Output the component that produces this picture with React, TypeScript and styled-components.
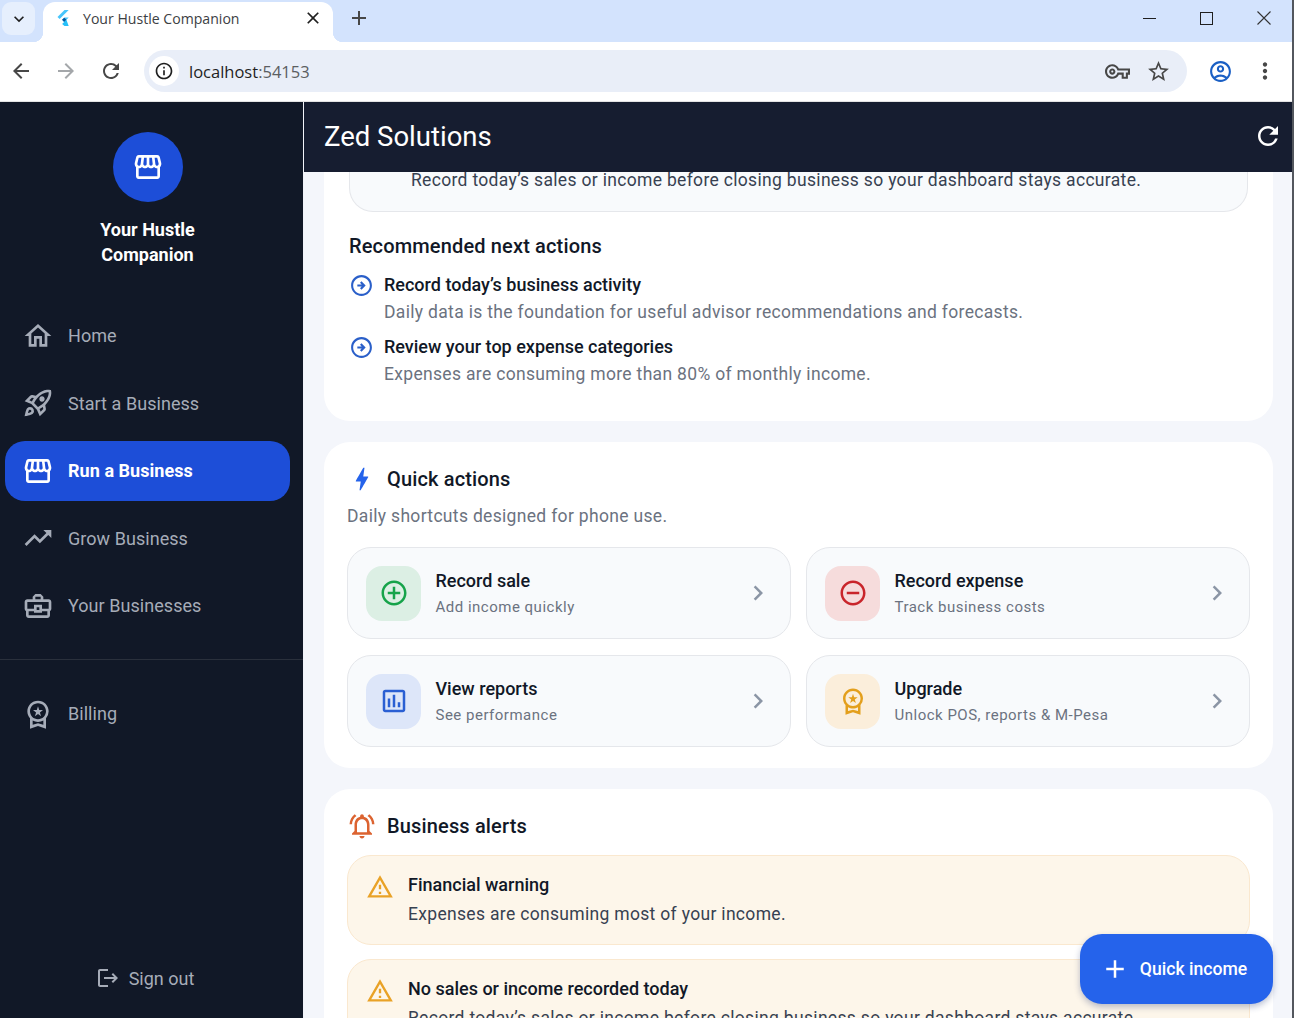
import React from 'react'
import styled, { createGlobalStyle } from 'styled-components'
import {
  MdAdd,
  MdArrowBack,
  MdArrowForward,
  MdBolt,
  MdChevronRight,
  MdClose,
  MdInfoOutline,
  MdKeyboardArrowDown,
  MdLogout,
  MdMoreVert,
  MdOutlineAccountCircle,
  MdOutlineAddCircleOutline,
  MdOutlineArrowCircleRight,
  MdOutlineAssessment,
  MdOutlineBusinessCenter,
  MdOutlineHome,
  MdOutlineNotificationsActive,
  MdOutlineRemoveCircleOutline,
  MdOutlineRocketLaunch,
  MdOutlineStorefront,
  MdOutlineVpnKey,
  MdOutlineWarningAmber,
  MdOutlineWorkspacePremium,
  MdRefresh,
  MdStarBorder,
  MdTrendingUp,
} from 'react-icons/md'

const GlobalStyle = createGlobalStyle`
  html, body {
    margin: 0;
    height: 100%;
    overflow: hidden;
  }
  body {
    font-family: Roboto, "Liberation Sans", sans-serif;
  }
`

const Window = styled.div`
  width: 1294px;
  height: 1018px;
  overflow: hidden;
  display: flex;
  flex-direction: column;
  box-sizing: border-box;
  border-right: 2px solid #53575e;
`

// BROWSER CHROME

const TabStrip = styled.div`
  height: 42px;
  flex-shrink: 0;
  background-color: #d3e3fd;
  display: flex;
  align-items: flex-end;
  padding-left: 2px;
`

const TabSearch = styled.div`
  width: 33px;
  height: 33px;
  margin-bottom: 7px;
  border-radius: 9px;
  background-color: #e6effd;
  color: #1f1f1f;
  display: flex;
  align-items: center;
  justify-content: center;
  font-size: 20px;
`

const Tab = styled.div`
  position: relative;
  width: 290px;
  height: 40px;
  margin-left: 8px;
  box-sizing: border-box;
  padding: 0 10px 8px 12px;
  background-color: white;
  border-radius: 12px 12px 0 0;
  display: flex;
  align-items: center;
  color: #3c4043;
  font-family: "Open Sans", Roboto, sans-serif;
  font-size: 14.1px;

  &::before, &::after {
    content: '';
    position: absolute;
    bottom: 0;
    width: 10px;
    height: 10px;
  }
  &::before {
    left: -10px;
    background: radial-gradient(circle at 0 0, #d3e3fd 10px, white 10.5px);
  }
  &::after {
    right: -10px;
    background: radial-gradient(circle at 100% 0, #d3e3fd 10px, white 10.5px);
  }
`

const TabTitle = styled.span`
  flex: 1;
  margin-left: 12px;
`

const TabClose = styled.span`
  display: flex;
  color: #1f1f1f;
  font-size: 20px;
`

const NewTab = styled.div`
  display: flex;
  margin: 0 0 12px 14px;
  color: #474747;
  font-size: 24px;
`

const WindowControls = styled.div`
  margin-left: auto;
  height: 36px;
  margin-bottom: 6px;
  display: flex;
  align-items: center;
  gap: 44px;
  padding-right: 21px;
  color: #1f1f1f;
`

const MinimizeGlyph = styled.div`
  width: 13px;
  height: 1px;
  background-color: #1f1f1f;
`

const MaximizeGlyph = styled.div`
  width: 11px;
  height: 11px;
  border: 1px solid #1f1f1f;
`

const Toolbar = styled.div`
  height: 60px;
  flex-shrink: 0;
  box-sizing: border-box;
  background-color: white;
  border-bottom: 1px solid #e3e3e3;
  display: flex;
  align-items: center;
  padding: 0 0 1px 9px;
  color: #474747;
`

const NavGlyph = styled.span<{ $muted?: boolean }>`
  width: 24px;
  height: 24px;
  margin-right: 21px;
  display: flex;
  font-size: 24px;
  color: ${(p) => (p.$muted ? '#a4a7aa' : '#474747')};
`

const Omnibox = styled.div`
  width: 1043px;
  height: 42px;
  box-sizing: border-box;
  padding: 0 16px 0 5px;
  border-radius: 21px;
  background-color: #e9eef8;
  display: flex;
  align-items: center;
`

const InfoBadge = styled.div`
  width: 30px;
  height: 30px;
  border-radius: 50%;
  background-color: white;
  color: #1f1f1f;
  display: flex;
  align-items: center;
  justify-content: center;
  font-size: 20px;
`

const Url = styled.span`
  margin-left: 10px;
  flex: 1;
  font-family: "Open Sans", Roboto, sans-serif;
  font-size: 16.5px;
  color: #1f1f1f;

  em {
    font-style: normal;
    color: #5b5e62;
  }
`

const OmniIcons = styled.div`
  display: flex;
  align-items: center;
  gap: 16px;
  font-size: 25px;
  color: #474747;
`

const KeyGlyph = styled(MdOutlineVpnKey)`
  font-size: 25px;
`

const ToolbarEnd = styled.div`
  display: flex;
  align-items: center;
  margin-left: 21px;
  gap: 19px;
`

const Profile = styled(MdOutlineAccountCircle)`
  font-size: 25px;
  color: #1a5fc4;
`

const More = styled(MdMoreVert)`
  font-size: 26px;
  color: #474747;
`

// APP LAYOUT

const AppFrame = styled.div`
  flex: 1;
  min-height: 0;
  display: flex;
`

const Sidebar = styled.aside`
  width: 303px;
  flex-shrink: 0;
  background-color: #111827;
  display: flex;
  flex-direction: column;
`

const Brand = styled.div`
  display: flex;
  flex-direction: column;
  align-items: center;
  padding: 30px 8px 0 0;
`

const BrandLogo = styled.div`
  width: 70px;
  height: 70px;
  border-radius: 50%;
  background-color: #1d4ed8;
  color: white;
  display: flex;
  align-items: center;
  justify-content: center;
  font-size: 32px;
`

const BrandName = styled.div`
  margin-top: 15px;
  width: 160px;
  text-align: center;
  color: white;
  font-size: 18px;
  line-height: 25px;
  font-weight: 700;
`

const NavList = styled.nav`
  margin-top: 39px;
  padding: 0 13px 0 5px;
  display: flex;
  flex-direction: column;
  gap: 7.5px;
`

const BillingList = styled(NavList)`
  margin-top: 0;
`

const NavItem = styled.div<{ $active?: boolean }>`
  height: 60px;
  box-sizing: border-box;
  padding: 0 0 1px 17px;
  border-radius: 20px;
  display: flex;
  align-items: center;
  gap: 14px;
  font-size: 18px;
  letter-spacing: 0.05px;
  font-weight: ${(p) => (p.$active ? 700 : 400)};
  color: ${(p) => (p.$active ? 'white' : '#a6acb8')};
  background-color: ${(p) => (p.$active ? '#1d4ed8' : 'transparent')};

  svg {
    font-size: 32px;
    flex-shrink: 0;
  }
`

const SideDivider = styled.div`
  height: 1px;
  margin: 23px 0 24px;
  background-color: #2a303c;
`

const SignOut = styled.div`
  margin-top: auto;
  margin-bottom: 28px;
  display: flex;
  align-items: center;
  justify-content: center;
  gap: 9px;
  color: #a6acb8;
  font-size: 18px;
  padding-right: 13px;

  svg {
    font-size: 24px;
  }
`

const Main = styled.main`
  flex: 1;
  min-width: 0;
  border-left: 1px solid #f1f3f9;
  background-color: #f4f6fb;
  display: flex;
  flex-direction: column;
  overflow: hidden;
  position: relative;
`

const AppBar = styled.header`
  height: 70px;
  flex-shrink: 0;
  box-sizing: border-box;
  padding: 0 9px 2px 20px;
  background-color: #161d30;
  color: white;
  display: flex;
  align-items: center;
  justify-content: space-between;
  position: relative;
  z-index: 1;
`

const AppTitle = styled.h1`
  margin: 0;
  font-size: 27.5px;
  font-weight: 400;
`

const RefreshIcon = styled(MdRefresh)`
  font-size: 30px;
`

const Scroller = styled.div`
  margin-top: -40px;
  padding: 0 19px 0 20px;
  display: flex;
  flex-direction: column;
  gap: 21px;
`

const Card = styled.section`
  background-color: white;
  border-radius: 26px;
  padding: 0 23px;
  flex-shrink: 0;
`

const TopCard = styled(Card)`
  height: 289px;
  border-radius: 0 0 26px 26px;
  padding: 0 25px;
`

const Banner = styled.div`
  height: 80px;
  box-sizing: border-box;
  padding: 36px 0 0 61px;
  background-color: #f8fafc;
  border: 1px solid #e5e7eb;
  border-top: 0;
  border-radius: 0 0 24px 24px;
  color: #374151;
  font-size: 17.5px;
  line-height: 24px;
  letter-spacing: 0.32px;
`

const Subheading = styled.h3`
  margin: 21px 0 14px;
  font-size: 20px;
  line-height: 26px;
  font-weight: 500;
  letter-spacing: 0.15px;
  color: #111827;
`

const ActionRow = styled.div`
  display: flex;
  gap: 10px;
  margin-bottom: 10px;
`

const ActionIcon = styled(MdOutlineArrowCircleRight)`
  font-size: 25px;
  color: #2a5fc9;
  flex-shrink: 0;
`

const ActionBody = styled.div`
  display: flex;
  flex-direction: column;
  gap: 2px;
`

const ActionTitle = styled.div`
  font-size: 18px;
  line-height: 24px;
  font-weight: 500;
  color: #111827;
`

const ActionText = styled.div`
  font-size: 17.5px;
  line-height: 26px;
  color: #6b7280;
  letter-spacing: 0.32px;
`

const CardHeading = styled.div`
  display: flex;
  align-items: center;
  gap: 10px;
  color: #111827;
  font-size: 20px;
  letter-spacing: 0.15px;
  font-weight: 500;
  line-height: 30px;
`

const CardHeadingIcon = styled.span<{ $color: string }>`
  width: 30px;
  display: flex;
  justify-content: center;
  font-size: 30px;
  color: ${(p) => p.$color};
`

const QuickCard = styled(Card)`
  padding-top: 22px;
  padding-bottom: 21px;
`

const QuickHint = styled.p`
  margin: 10px 0 19px;
  font-size: 17.5px;
  line-height: 24px;
  color: #6b7280;
  letter-spacing: 0.32px;
`

const TileGrid = styled.div`
  display: grid;
  grid-template-columns: 1fr 1fr;
  gap: 16px 15px;
`

const Tile = styled.div`
  height: 92px;
  box-sizing: border-box;
  padding: 0 19px 0 18px;
  background-color: #f8fafc;
  border: 1px solid #e5e7eb;
  border-radius: 24px;
  display: flex;
  align-items: center;
  gap: 14.5px;
`

const TileIcon = styled.div<{ $bg: string; $color: string }>`
  width: 55px;
  height: 55px;
  flex-shrink: 0;
  border-radius: 16px;
  background-color: ${(p) => p.$bg};
  color: ${(p) => p.$color};
  display: flex;
  align-items: center;
  justify-content: center;
  font-size: 30px;
`

const TileBody = styled.div`
  flex: 1;
  display: flex;
  flex-direction: column;
  gap: 4px;
`

const TileTitle = styled.div`
  color: #111827;
  font-size: 18px;
  line-height: 24px;
  font-weight: 500;
`

const TileText = styled.div`
  color: #6b7280;
  font-size: 15px;
  line-height: 20px;
  letter-spacing: 0.5px;
`

const Chevron = styled(MdChevronRight)`
  font-size: 30px;
  margin-right: -2px;
  color: #8b95a5;
`

const AlertsCard = styled(Card)`
  padding-top: 22px;
`

const AlertList = styled.div`
  margin-top: 14px;
  display: flex;
  flex-direction: column;
  gap: 14px;
`

const Alert = styled.div`
  height: 90px;
  box-sizing: border-box;
  padding: 17px 18px;
  background-color: #fdf6ea;
  border: 1px solid #fae8cf;
  border-radius: 24px;
  display: flex;
  gap: 14px;
`

const AlertIcon = styled(MdOutlineWarningAmber)`
  font-size: 28px;
  color: #e9a227;
  flex-shrink: 0;
`

const AlertBody = styled.div`
  display: flex;
  flex-direction: column;
  gap: 4px;
`

const AlertTitle = styled.div`
  color: #111827;
  font-size: 18px;
  line-height: 24px;
  font-weight: 500;
`

const AlertText = styled.div`
  color: #374151;
  font-size: 17.5px;
  line-height: 26px;
  letter-spacing: 0.32px;
  white-space: nowrap;
`

const Fab = styled.button`
  position: absolute;
  right: 19px;
  bottom: 14px;
  width: 193px;
  height: 70px;
  border: 0;
  border-radius: 22px;
  padding: 0 6px 0 0;
  background-color: #2563eb;
  color: white;
  font-family: inherit;
  font-size: 17.6px;
  font-weight: 500;
  display: flex;
  align-items: center;
  justify-content: center;
  gap: 10px;
  box-shadow: 0 3px 6px rgba(30, 50, 110, 0.3);
  z-index: 2;

  svg {
    font-size: 30px;
  }
`

const FlutterLogo = () => (
  <svg width="16" height="18" viewBox="0 0 16 18">
    <path d="M9.5 1h4.2L4.6 9.9 2.5 7.9z" fill="#47c5fb" />
    <path d="M9.5 8.4h4.2L9.2 13l-2.1-2.2z" fill="#47c5fb" />
    <path d="M7.1 10.8l2.1-2.1 2.2 2.1-2.2 2.2z" fill="#00569e" />
    <path d="M9.2 13l2.2-2.2 2.3 6.2H9.5L7.1 14.9z" fill="#00b5f8" opacity="0.85" />
  </svg>
)

const ThinClose = () => (
  <svg width="14" height="14" viewBox="0 0 14 14" fill="none" stroke="#333" strokeWidth="1.1">
    <path d="M0.5 0.5l13 13M13.5 0.5l-13 13" />
  </svg>
)

export default function App(): JSX.Element {
  return (
    <Window>
      <GlobalStyle />
      <TabStrip>
        <TabSearch>
          <MdKeyboardArrowDown />
        </TabSearch>
        <Tab>
          <FlutterLogo />
          <TabTitle>Your Hustle Companion</TabTitle>
          <TabClose>
            <MdClose />
          </TabClose>
        </Tab>
        <NewTab>
          <MdAdd />
        </NewTab>
        <WindowControls>
          <MinimizeGlyph />
          <MaximizeGlyph />
          <ThinClose />
        </WindowControls>
      </TabStrip>
      <Toolbar>
        <NavGlyph>
          <MdArrowBack />
        </NavGlyph>
        <NavGlyph $muted>
          <MdArrowForward />
        </NavGlyph>
        <NavGlyph>
          <MdRefresh />
        </NavGlyph>
        <Omnibox>
          <InfoBadge>
            <MdInfoOutline />
          </InfoBadge>
          <Url>
            localhost<em>:54153</em>
          </Url>
          <OmniIcons>
            <KeyGlyph />
            <MdStarBorder />
          </OmniIcons>
        </Omnibox>
        <ToolbarEnd>
          <Profile />
          <More />
        </ToolbarEnd>
      </Toolbar>
      <AppFrame>
        <Sidebar>
          <Brand>
            <BrandLogo>
              <MdOutlineStorefront />
            </BrandLogo>
            <BrandName>Your Hustle Companion</BrandName>
          </Brand>
          <NavList>
            <NavItem>
              <MdOutlineHome />
              Home
            </NavItem>
            <NavItem>
              <MdOutlineRocketLaunch />
              Start a Business
            </NavItem>
            <NavItem $active>
              <MdOutlineStorefront />
              Run a Business
            </NavItem>
            <NavItem>
              <MdTrendingUp />
              Grow Business
            </NavItem>
            <NavItem>
              <MdOutlineBusinessCenter />
              Your Businesses
            </NavItem>
          </NavList>
          <SideDivider />
          <BillingList as="div">
            <NavItem>
              <MdOutlineWorkspacePremium />
              Billing
            </NavItem>
          </BillingList>
          <SignOut>
            <MdLogout />
            Sign out
          </SignOut>
        </Sidebar>
        <Main>
          <AppBar>
            <AppTitle>Zed Solutions</AppTitle>
            <RefreshIcon />
          </AppBar>
          <Scroller>
            <TopCard>
              <Banner>Record today’s sales or income before closing business so your dashboard stays accurate.</Banner>
              <Subheading>Recommended next actions</Subheading>
              <ActionRow>
                <ActionIcon />
                <ActionBody>
                  <ActionTitle>Record today’s business activity</ActionTitle>
                  <ActionText>Daily data is the foundation for useful advisor recommendations and forecasts.</ActionText>
                </ActionBody>
              </ActionRow>
              <ActionRow>
                <ActionIcon />
                <ActionBody>
                  <ActionTitle>Review your top expense categories</ActionTitle>
                  <ActionText>Expenses are consuming more than 80% of monthly income.</ActionText>
                </ActionBody>
              </ActionRow>
            </TopCard>
            <QuickCard>
              <CardHeading>
                <CardHeadingIcon $color="#2563eb">
                  <MdBolt />
                </CardHeadingIcon>
                Quick actions
              </CardHeading>
              <QuickHint>Daily shortcuts designed for phone use.</QuickHint>
              <TileGrid>
                <Tile>
                  <TileIcon $bg="#dcefe4" $color="#16a34a">
                    <MdOutlineAddCircleOutline />
                  </TileIcon>
                  <TileBody>
                    <TileTitle>Record sale</TileTitle>
                    <TileText>Add income quickly</TileText>
                  </TileBody>
                  <Chevron />
                </Tile>
                <Tile>
                  <TileIcon $bg="#f6dcdc" $color="#c9252b">
                    <MdOutlineRemoveCircleOutline />
                  </TileIcon>
                  <TileBody>
                    <TileTitle>Record expense</TileTitle>
                    <TileText>Track business costs</TileText>
                  </TileBody>
                  <Chevron />
                </Tile>
                <Tile>
                  <TileIcon $bg="#dde6f9" $color="#2a5fd3">
                    <MdOutlineAssessment />
                  </TileIcon>
                  <TileBody>
                    <TileTitle>View reports</TileTitle>
                    <TileText>See performance</TileText>
                  </TileBody>
                  <Chevron />
                </Tile>
                <Tile>
                  <TileIcon $bg="#fbeedb" $color="#e39f1c">
                    <MdOutlineWorkspacePremium />
                  </TileIcon>
                  <TileBody>
                    <TileTitle>Upgrade</TileTitle>
                    <TileText>Unlock POS, reports &amp; M-Pesa</TileText>
                  </TileBody>
                  <Chevron />
                </Tile>
              </TileGrid>
            </QuickCard>
            <AlertsCard>
              <CardHeading>
                <CardHeadingIcon $color="#dc6330">
                  <MdOutlineNotificationsActive />
                </CardHeadingIcon>
                Business alerts
              </CardHeading>
              <AlertList>
                <Alert>
                  <AlertIcon />
                  <AlertBody>
                    <AlertTitle>Financial warning</AlertTitle>
                    <AlertText>Expenses are consuming most of your income.</AlertText>
                  </AlertBody>
                </Alert>
                <Alert>
                  <AlertIcon />
                  <AlertBody>
                    <AlertTitle>No sales or income recorded today</AlertTitle>
                    <AlertText>Record today’s sales or income before closing business so your dashboard stays accurate.</AlertText>
                  </AlertBody>
                </Alert>
              </AlertList>
            </AlertsCard>
          </Scroller>
          <Fab>
            <MdAdd />
            Quick income
          </Fab>
        </Main>
      </AppFrame>
    </Window>
  )
}
